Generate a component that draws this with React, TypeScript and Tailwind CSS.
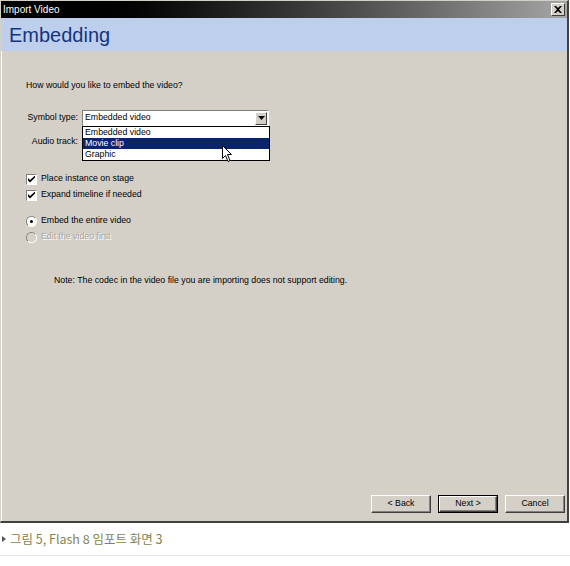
import type { ReactNode } from 'react'

const UI = { fontFamily: '"Liberation Sans", Arial, sans-serif' }

// ─── Win classic bits ─────────────────────────────────────────────────────────

function CheckBox({ label }: { label: string }) {
  return (
    <div className="flex h-4 items-center gap-[4px]">
      <span className="flex h-[11px] w-[11px] items-center justify-center border border-t-[#808080] border-l-[#808080] border-b-white border-r-white bg-white">
        <svg width="7" height="7" viewBox="0 0 7 7">
          <path d="M0 2 L0 4.5 L2 6.5 L7 1.5 L7 -0.5 L2 4 Z" fill="#000" />
        </svg>
      </span>
      <span>{label}</span>
    </div>
  )
}

function Radio({ label, checked, disabled }: { label: string; checked?: boolean; disabled?: boolean }) {
  return (
    <div className={`flex h-4 items-center gap-[4px] ${disabled ? 'text-[#a8a69f]' : ''}`}>
      <span className="relative flex h-[11px] w-[11px] items-center justify-center rounded-full border border-t-[#808080] border-l-[#808080] border-b-white border-r-white bg-[#d4d0c8]">
        <span className={`flex h-[9px] w-[9px] items-center justify-center rounded-full ${disabled ? 'bg-[#d4d0c8]' : 'bg-white'}`}>
          {checked && <span className="h-[3px] w-[3px] rounded-full bg-black" />}
        </span>
      </span>
      <span className={disabled ? '[text-shadow:1px_1px_0_#fff]' : ''}>{label}</span>
    </div>
  )
}

function Btn({ children, primary }: { children: ReactNode; primary?: boolean }) {
  return (
    <div className={`h-[18px] w-[60px] ${primary ? 'border border-black' : ''}`}>
      <div className="flex h-full w-full items-center justify-center border border-t-white border-l-white border-b-[#404040] border-r-[#404040] bg-[#d4d0c8] shadow-[inset_-1px_-1px_0_#808080]">
        {children}
      </div>
    </div>
  )
}

// ─── Main ─────────────────────────────────────────────────────────────────────

export default function App() {
  return (
    <div className="relative h-[566px] w-[570px] overflow-hidden bg-white text-[8.75px] text-black" style={UI}>
      {/* Window */}
      <div className="flex h-[523px] w-[569px] flex-col border-l border-t border-l-[#d4d0c8] border-t-[#d4d0c8] border-r-2 border-b-2 border-r-[#404040] border-b-[#404040]">
        {/* Title bar */}
        <div className="flex h-[17px] items-center justify-between bg-gradient-to-r from-black from-10% to-[#a6a6a6] pl-[2px] pr-[2px]">
          <span className="text-[10px] text-white">Import Video</span>
          <span className="flex h-[13px] w-[14px] items-center justify-center border border-t-white border-l-white border-b-[#404040] border-r-[#404040] bg-[#d4d0c8]">
            <svg width="8" height="7" viewBox="0 0 8 7">
              <path d="M0 0 L2 0 L4 2 L6 0 L8 0 L5 3.5 L8 7 L6 7 L4 5 L2 7 L0 7 L3 3.5 Z" fill="#000" />
            </svg>
          </span>
        </div>

        {/* Header */}
        <div className="flex h-[33px] items-center bg-[#bdcfec] pl-[8px]">
          <span className="text-[20px] leading-none text-[#15357f]">Embedding</span>
        </div>

        {/* Body */}
        <div className="relative flex flex-1 flex-col bg-[#d4d0c8] border-l border-l-white">
          <div className="flex flex-col pl-[24px] pt-[26px]">
            <div className="h-4 leading-4">How would you like to embed the video?</div>

            <div className="mt-[17px] flex h-4 items-center">
              <span className="w-[52px] whitespace-nowrap text-right">Symbol type:</span>
              <div className="relative ml-[4px]">
                <div className="flex h-[17px] w-[187px] items-center border border-t-[#808080] border-l-[#808080] border-b-white border-r-white bg-white">
                  <span className="flex-1 pl-[2px]">Embedded video</span>
                  <span className="mr-[1px] flex h-[13px] w-[12px] items-center justify-center border border-t-white border-l-white border-b-[#404040] border-r-[#404040] bg-[#d4d0c8]">
                    <svg width="7" height="4" viewBox="0 0 7 4"><path d="M0 0 H7 L3.5 4 Z" fill="#000" /></svg>
                  </span>
                </div>
                {/* Open list */}
                <div className="absolute left-0 top-[16px] z-10 flex w-[188px] flex-col border border-black bg-white">
                  <div className="h-[11px] pl-[2px] leading-[11px]">Embedded video</div>
                  <div className="h-[11px] bg-[#0a246a] pl-[2px] leading-[11px] text-white">Movie clip</div>
                  <div className="h-[11px] pl-[2px] leading-[11px]">Graphic</div>
                </div>
              </div>
            </div>

            <div className="mt-[8px] flex h-4 items-center">
              <span className="w-[52px] whitespace-nowrap text-right">Audio track:</span>
            </div>

            <div className="mt-[21px] flex flex-col">
              <CheckBox label="Place instance on stage" />
              <CheckBox label="Expand timeline if needed" />
            </div>

            <div className="mt-[10px] flex flex-col">
              <Radio label="Embed the entire video" checked />
              <Radio label="Edit the video first" disabled />
            </div>

            <div className="mt-[27px] h-4 pl-[28px] leading-4">
              Note: The codec in the video file you are importing does not support editing.
            </div>
          </div>

          {/* Buttons */}
          <div className="mt-auto flex justify-end gap-[7px] pb-[8px] pr-[2px]">
            <Btn>&lt; Back</Btn>
            <Btn primary>Next &gt;</Btn>
            <Btn>Cancel</Btn>
          </div>

          {/* Mouse pointer */}
          <svg className="absolute left-[220px] top-[94px] z-20" width="12" height="18" viewBox="0 0 12 18">
            <path d="M0.5 0.5 L0.5 13.5 L3.5 10.5 L6 16.5 L8 15.5 L5.5 9.5 L9.5 9.5 Z" fill="#fff" stroke="#000" strokeWidth="1" strokeLinejoin="miter" />
          </svg>
        </div>
      </div>

      {/* Caption */}
      <div className="mt-[7px] flex items-center gap-[4px] pl-[2px]">
        <svg width="4" height="6" viewBox="0 0 4 6"><path d="M0 0 L4 3 L0 6 Z" fill="#555" /></svg>
        <span className="text-[12.5px] text-[#86844f]" style={{ fontFamily: '"Noto Sans CJK KR", "Liberation Sans", sans-serif' }}>
          그림 5, Flash 8 임포트 화면 3
        </span>
      </div>
      <div className="mt-[6px] h-px w-full bg-[#e4e4e4]" />
    </div>
  )
}
